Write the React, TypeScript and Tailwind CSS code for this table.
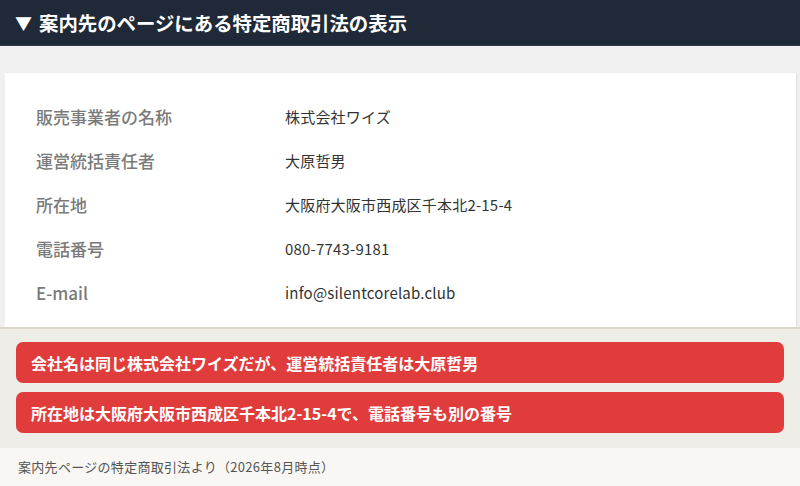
import React from "react";

const rows: [string, string][] = [
  ["販売事業者の名称", "株式会社ワイズ"],
  ["運営統括責任者", "大原哲男"],
  ["所在地", "大阪府大阪市西成区千本北2-15-4"],
  ["電話番号", "080-7743-9181"],
  ["E-mail", "info@silentcorelab.club"],
];

export default function App() {
  return (
    <div
      className="w-[800px] h-[486px] overflow-hidden flex flex-col bg-[#f8f7f3]"
      style={{ fontFamily: '"Noto Sans CJK JP", "Noto Sans", sans-serif' }}
    >
      <div className="h-[46px] bg-[#1f2937] flex items-center pl-[15px] text-white font-bold text-[19.4px] border-b border-[#2c3a4c]">
        <span className="text-[17px] mr-[7px]">▼</span>
        <span>案内先のページにある特定商取引法の表示</span>
      </div>
      <div className="bg-[#f0f0f0] pt-[27px] pl-[5px] pr-[4px]">
        <div className="bg-white pt-[22px] pb-[12px] shadow-[1px_0_1px_rgba(0,0,0,0.06)]">
          {rows.map(([k, v]) => (
            <div key={k} className="h-[44px] flex items-center">
              <div className="w-[280px] pl-[31px] text-[17px] font-medium text-[#7a7a7a]">{k}</div>
              <div className="text-[15px] text-[#333333] tracking-[0.2px]">{v}</div>
            </div>
          ))}
        </div>
      </div>
      <div className="bg-[#efede8] border-t-2 border-[#ddd6cb] px-4 pt-[13px] pb-[15px] flex flex-col gap-[9px]">
        <div className="h-[41px] rounded-[7px] bg-[#e03c3c] flex items-center pl-[15px] text-white font-bold text-[16px]">
          会社名は同じ株式会社ワイズだが、運営統括責任者は大原哲男
        </div>
        <div className="h-[41px] rounded-[7px] bg-[#e03c3c] flex items-center pl-[15px] text-white font-bold text-[16px]">
          所在地は大阪府大阪市西成区千本北2-15-4で、電話番号も別の番号
        </div>
      </div>
      <div className="flex-1 pl-[18px] pt-[9px] text-[13px] text-[#555555] tracking-[0.3px]">
        案内先ページの特定商取引法より（2026年8月時点）
      </div>
    </div>
  );
}
